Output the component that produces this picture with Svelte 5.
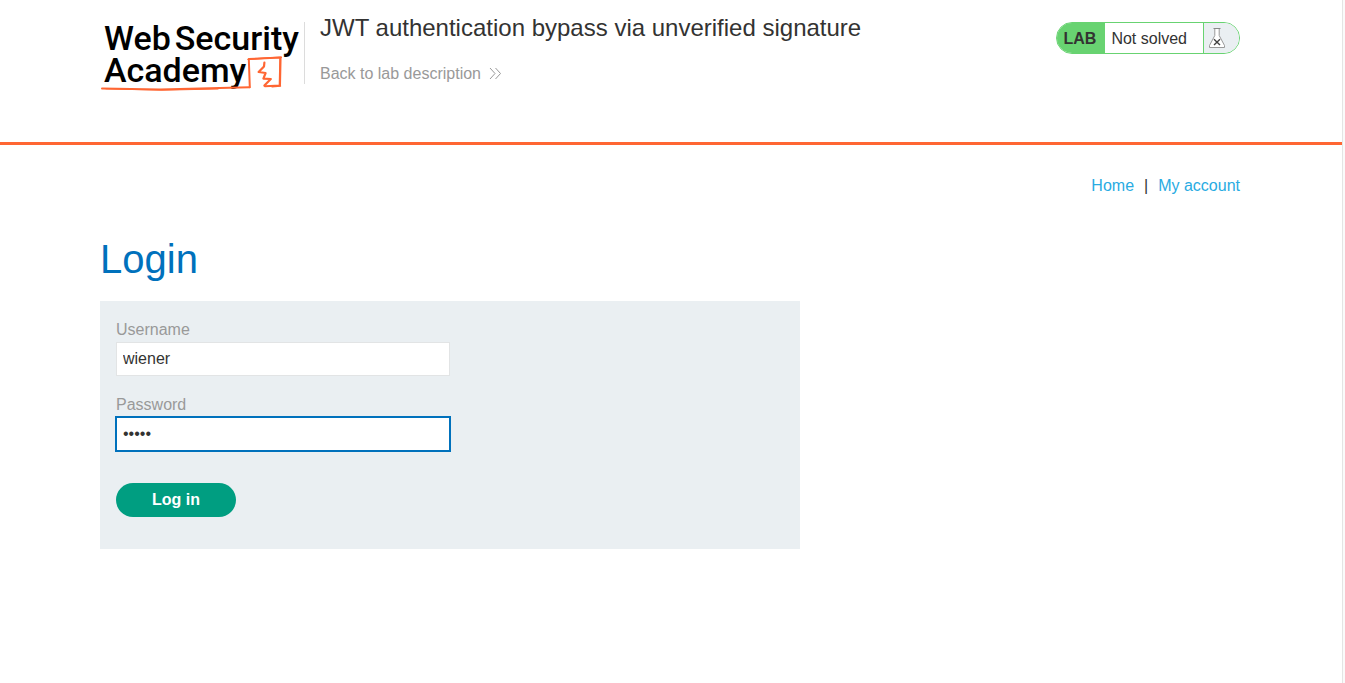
<script lang="ts">
  let username = $state('wiener');
  let password = $state('peter');
</script>

<svelte:head>
  <title>JWT authentication bypass via unverified signature</title>
</svelte:head>

<div class="shell">
  <div class="page">
    <header class="banner">
      <div class="container banner-row">
        <a class="logo" href="#academy">
          <span class="logo-line"><span>Web</span><span>Security</span></span>
          <span class="logo-line">Academy</span>
          <svg class="logo-mark" viewBox="0 0 184 40" aria-hidden="true">
            <g fill="none" stroke="#ff6633" stroke-linejoin="round" stroke-linecap="round">
              <path d="M2 35.4 L60 36.4 L100 35.6 L149.5 34.2" stroke-width="2" />
              <path d="M6 35.8 L62 37.2 L118 36" stroke-width="1" />
              <path d="M149.8 34.2 L148.8 6 L180.6 4.6 L180 32.4 L165 33.2" stroke-width="2" />
              <path d="M148 6.4 L164 5.2 L181.4 4.2 M180 5 L179.4 32 M172 33.8 L180.5 33" stroke-width="1.4" />
              <path d="M164.4 9.6 L164 13.4 L158.6 19 L165.6 20 L163.4 25.6 L170.8 26 L164.4 32.6" stroke-width="2.2" />
            </g>
          </svg>
        </a>
        <div class="titles">
          <h2>JWT authentication bypass via unverified signature</h2>
          <a class="back" href="#description">
            Back to lab description
            <svg width="13" height="14" viewBox="0 0 13 14" aria-hidden="true">
              <path d="M1 1 L6 6.5 L1 12 M6.5 1 L11.5 6.5 L6.5 12" fill="none" stroke="#999" stroke-width="1" />
            </svg>
          </a>
        </div>
        <div class="status">
          <span class="tag">LAB</span>
          <span class="state">Not solved</span>
          <span class="flask">
            <svg width="18" height="22" viewBox="0 0 18 22" aria-hidden="true">
              <path d="M6.8 2 V8.5 L1.5 18.5 V20.5 H16.5 V18.5 L11.2 8.5 V2" fill="#fff" stroke="#999" stroke-width="1" />
              <path d="M5.5 1.5 H12.5" fill="none" stroke="#888" stroke-width="1.2" />
              <path d="M6 12.2 L12 18 M12 12.2 L6 18" fill="none" stroke="#444" stroke-width="1.4" />
            </svg>
          </span>
        </div>
      </div>
    </header>

    <main class="container">
      <nav>
        <a href="#home">Home</a>
        <span>|</span>
        <a href="#account">My account</a>
      </nav>
      <h1>Login</h1>
      <form onsubmit={(e) => e.preventDefault()}>
        <label for="username">Username</label>
        <input id="username" type="text" name="username" bind:value={username} />
        <label for="password">Password</label>
        <input id="password" class="active" type="password" name="password" bind:value={password} />
        <button type="submit">Log in</button>
      </form>
    </main>
  </div>
  <div class="gutter"></div>
</div>

<style>
  :global(body) {
    background: #fff;
  }
  .shell {
    display: flex;
    min-height: 100vh;
    font-family: "Liberation Sans", Arial, sans-serif;
    font-size: 16px;
    line-height: 20px;
    color: #333332;
  }
  .page {
    flex: 1;
    min-width: 0;
  }
  .gutter {
    flex: none;
    box-sizing: border-box;
    width: 3px;
    border-left: 1px solid #e4e4e4;
    background: #fafafa;
  }
  .container {
    max-width: 1140px;
    margin: 0 auto;
    padding: 0 2px 0 0;
  }
  a {
    text-decoration: none;
  }
  .banner {
    border-bottom: 3px solid #ff6633;
  }
  .banner-row {
    display: flex;
    align-items: flex-start;
    min-height: 120px;
    padding-top: 22px;
  }
  .logo {
    position: relative;
    flex: none;
    box-sizing: border-box;
    width: 205px;
    height: 62px;
    padding-left: 4px;
    border-right: 1px solid #dcdcdc;
    font-family: Roboto, sans-serif;
    font-size: 34px;
    font-weight: 500;
    line-height: 32px;
    color: #000;
  }
  .logo-line {
    display: flex;
    gap: 4px;
    white-space: nowrap;
  }
  .logo-mark {
    position: absolute;
    left: 0;
    top: 31px;
    width: 184px;
    height: 40px;
  }
  .titles {
    flex: 1;
    min-width: 0;
    padding-left: 15px;
  }
  h2 {
    margin: -8px 0 0;
    font-size: 24px;
    font-weight: 400;
    line-height: 28px;
  }
  .back {
    display: flex;
    align-items: center;
    gap: 8px;
    margin-top: 22px;
    color: #999;
  }
  .status {
    display: flex;
    flex: none;
    box-sizing: border-box;
    height: 32px;
    overflow: hidden;
    border: 1px solid #68d371;
    border-radius: 16px;
    line-height: 32px;
  }
  .tag {
    padding: 0 9px 0 7px;
    background: #68d371;
    font-weight: 700;
  }
  .state {
    padding: 0 16px 0 6px;
  }
  .flask {
    display: flex;
    padding: 4px 13px 0 4px;
    border-left: 1px solid #68d371;
    background: #eaeff2;
  }
  nav {
    display: flex;
    justify-content: flex-end;
    gap: 10px;
    padding-top: 31px;
  }
  nav a {
    color: #29abe2;
  }
  h1 {
    margin: 39px 0 18px;
    font-size: 40px;
    font-weight: 400;
    line-height: 48px;
    color: #0071bc;
  }
  form {
    display: flex;
    flex-direction: column;
    align-items: flex-start;
    box-sizing: border-box;
    max-width: 700px;
    padding: 19px 16px 32px;
    background: #eaeff2;
  }
  label {
    color: #999;
  }
  input {
    box-sizing: border-box;
    width: 100%;
    max-width: 334px;
    height: 34px;
    margin: 2px 0 19px;
    padding: 0 6px;
    border: 1px solid #e2e4e5;
    border-radius: 0;
    background: #fff;
    font: inherit;
    color: inherit;
  }
  input:focus,
  input.active {
    border-color: #0071bc;
    outline: 1px solid #0071bc;
  }
  button {
    width: 120px;
    height: 34px;
    margin-top: 13px;
    border: 0;
    border-radius: 17px;
    background: #009e81;
    font: inherit;
    font-weight: 700;
    color: #fff;
  }
</style>
